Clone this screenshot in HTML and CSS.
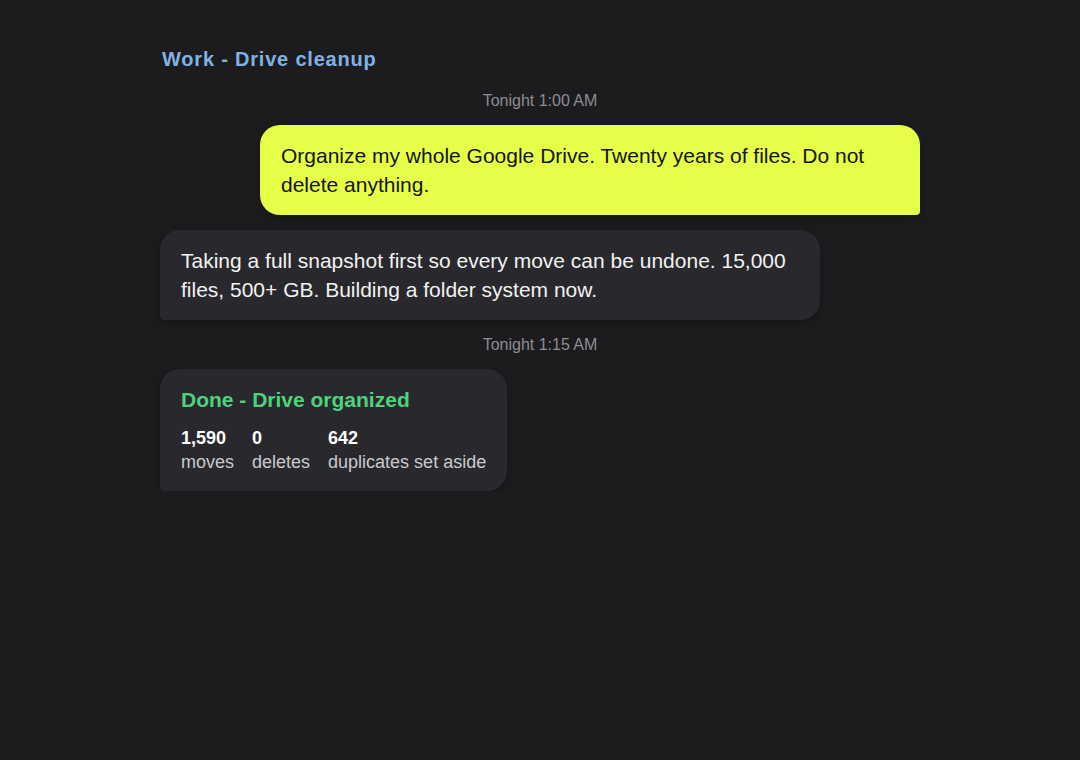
FILE: index.html
```html
<!DOCTYPE html>
<html lang="en">
<head>
<meta charset="utf-8">
<title>Work - Drive cleanup</title>
<link rel="stylesheet" href="styles.css">
</head>
<body>
<main class="chat">
  <h1 class="chat-title">Work - Drive cleanup</h1>
  <div class="stamp">Tonight 1:00 AM</div>
  <div class="bubble bubble-user">Organize my whole Google Drive. Twenty years of files. Do not delete anything.</div>
  <div class="bubble bubble-bot">Taking a full snapshot first so every move can be undone. 15,000 files, 500+ GB. Building a folder system now.</div>
  <div class="stamp">Tonight 1:15 AM</div>
  <div class="bubble bubble-bot card">
    <div class="card-title">Done - Drive organized</div>
    <div class="stats">
      <div class="stat"><span class="stat-num">1,590</span><span class="stat-label">moves</span></div>
      <div class="stat"><span class="stat-num">0</span><span class="stat-label">deletes</span></div>
      <div class="stat"><span class="stat-num">642</span><span class="stat-label">duplicates set aside</span></div>
    </div>
  </div>
</main>
</body>
</html>
```

FILE: styles.css
```css
html, body {
  margin: 0;
  background: #1c1c1e;
}
body {
  font-family: "Liberation Sans", Arial, sans-serif;
  color: #f2f2f2;
}
.chat {
  width: 760px;
  margin: 0 auto;
  padding-top: 47px;
  display: flex;
  flex-direction: column;
  gap: 14px;
}
.chat-title {
  margin: 0 0 5px 2px;
  font-size: 20px;
  line-height: 24px;
  font-weight: 700;
  letter-spacing: 0.8px;
  color: #80b3e3;
}
.stamp {
  text-align: center;
  font-size: 16px;
  line-height: 22px;
  margin-bottom: -1px;
  color: #8d8d92;
}
.bubble {
  max-width: 660px;
  box-sizing: border-box;
  padding: 16px 21px;
  font-size: 21px;
  line-height: 29px;
  border-radius: 20px;
  box-shadow: 0 3px 10px rgba(0, 0, 0, 0.25);
}
.bubble-user {
  align-self: flex-end;
  background: #e6ff47;
  color: #141414;
  border-bottom-right-radius: 4px;
}
.bubble-bot {
  align-self: flex-start;
  background: #29292d;
  color: #f2f2f2;
  border-bottom-left-radius: 4px;
  margin-top: 1px;
}
.card {
  padding: 18px 21px 17px;
  margin-top: 0;
}
.card-title {
  font-size: 21px;
  line-height: 26px;
  font-weight: 700;
  color: #4fd27d;
  margin-bottom: 13px;
}
.stats {
  display: flex;
  gap: 18px;
}
.stat {
  display: flex;
  flex-direction: column;
}
.stat-num {
  font-size: 18px;
  line-height: 24px;
  font-weight: 700;
  color: #ffffff;
}
.stat-label {
  font-size: 18px;
  line-height: 24px;
  color: #c9c9ce;
}
```
